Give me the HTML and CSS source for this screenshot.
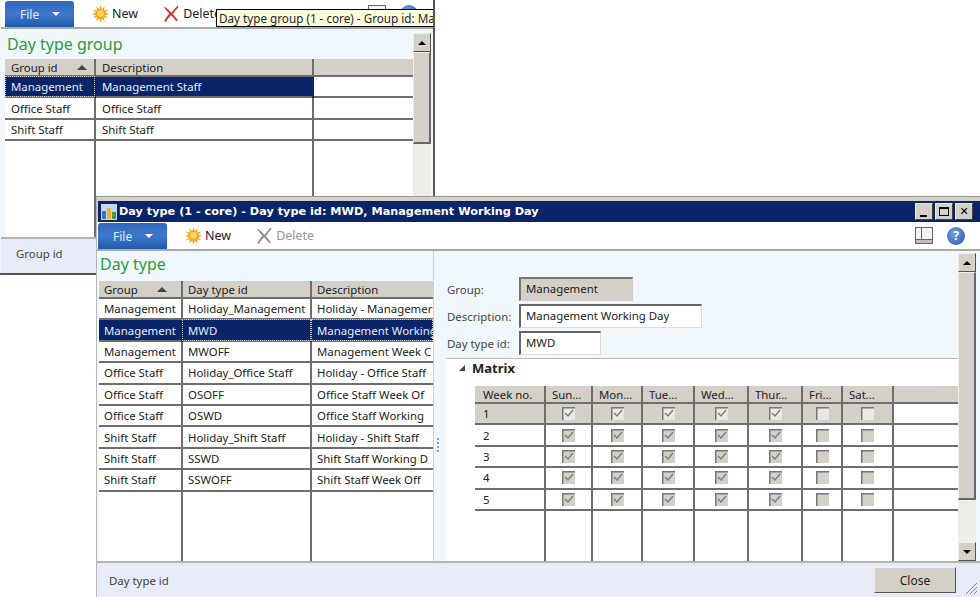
FILE: index.html
```html
<!DOCTYPE html>
<html lang="en">
<head>
    <meta charset="UTF-8">
    <title>Day type</title>
    <link rel="stylesheet" href="styles.css">
</head>
<body>
    <svg class="defs" width="0" height="0">
        <symbol id="sun" viewBox="0 0 20 20">
            <path d="M10 0l1.500 5 3.500-3.500-1 5 5-1-3.500 3.500 5 1.500-5 1.500 3.500 3.500-5-1 1 5-3.500-3.500-1.500 5-1.500-5-3.500 3.500 1-5-5 1 3.500-3.500-5-1.500 5-1.500-3.500-3.500 5 1-1-5 3.500 3.500z" fill="#f6a623"/>
            <circle cx="10" cy="10" r="4" fill="#fcd45c"/>
        </symbol>
        <symbol id="cross" viewBox="0 0 20 20">
            <path d="M2 2c4 3 6 5 8 7 2-2 4-5 7-8l1.500 1c-3 3-5 6-7 9 2 2 4 4 6 7l-2 1c-2-3-4-5-6-7-2 2-4 4-6 8l-2-1c2-4 4-7 6-9-2-2-4-4-6-7z"/>
        </symbol>
        <symbol id="tick" viewBox="0 0 13 13">
            <rect width="13" height="13" fill="currentColor"/>
            <path d="M0.750 13V0.750H13" fill="none" stroke="#777" stroke-width="1.500"/>
            <path d="M3 6l3 3 5-6" fill="none" stroke="#808080" stroke-width="1.500"/>
        </symbol>
        <symbol id="untick" viewBox="0 0 13 13">
            <rect width="13" height="13" fill="currentColor"/>
            <path d="M0.750 13V0.750H13" fill="none" stroke="#777" stroke-width="1.500"/>
        </symbol>
    </svg>

    <div class="desktop">
        <!-- back window -->
        <div class="window window-back">
            <div class="toolbar">
                <div class="file-btn">File <span class="caret"></span></div>
                <div class="tool"><svg class="ico"><use href="#sun"/></svg>New</div>
                <div class="tool"><svg class="ico ico-red"><use href="#cross"/></svg>Delete</div>
                <div class="tool-right">
                    <svg class="layout-ico" viewBox="0 0 18 18">
                        <rect x="0.500" y="0.500" width="17" height="16" fill="#f4f4f4" stroke="#666"/>
                    </svg>
                    <div class="help"></div>
                </div>
            </div>
            <div class="body">
                <div class="pane-left">
                    <h2 class="form-title">Day type group</h2>
                    <div class="grid-box">
                        <table class="grid">
                            <colgroup><col class="w90"><col class="w218"><col></colgroup>
                            <tr class="head"><th>Group id <span class="sort"></span></th><th>Description</th><th></th></tr>
                            <tr class="row sel"><td class="focus">Management</td><td>Management Staff</td><td class="blank"></td></tr>
                            <tr class="row"><td>Office Staff</td><td>Office Staff</td><td></td></tr>
                            <tr class="row"><td>Shift Staff</td><td>Shift Staff</td><td></td></tr>
                            <tr class="filler"><td></td><td></td><td></td></tr>
                        </table>
                    </div>
                </div>
                <div class="scrollbar">
                    <div class="sb-btn"><span class="up"></span></div>
                    <div class="sb-thumb thumb-back"></div>
                    <div class="sb-track"></div>
                </div>
            </div>
            <div class="status">Group id</div>
            <div class="tooltip">Day type group (1 - core) - Group id: Ma</div>
        </div>

        <!-- front window -->
        <div class="window window-front">
            <div class="titlebar">
                <svg class="app-ico" viewBox="0 0 16 16">
                    <rect width="16" height="16" fill="#c7d8ec"/>
                    <rect x="1" y="7" width="4" height="8" fill="#3f74c4"/>
                    <rect x="6" y="4" width="4" height="11" fill="#e8b33a"/>
                    <rect x="11" y="8" width="4" height="7" fill="#4d9a3e"/>
                </svg>
                <span class="title-text">Day type (1 - core) - Day type id: MWD, Management Working Day</span>
                <div class="win-btns">
                    <div class="win-btn"><span class="min"></span></div>
                    <div class="win-btn"><span class="max"></span></div>
                    <div class="win-btn close-x">✕</div>
                </div>
            </div>
            <div class="toolbar">
                <div class="file-btn">File <span class="caret"></span></div>
                <div class="tool"><svg class="ico"><use href="#sun"/></svg>New</div>
                <div class="tool disabled"><svg class="ico ico-gray"><use href="#cross"/></svg>Delete</div>
                <div class="tool-right">
                    <svg class="layout-ico" viewBox="0 0 18 18">
                        <rect x="0.500" y="0.500" width="17" height="16" fill="#f4f4f4" stroke="#666"/>
                        <path d="M6.500 1v11M1 12.500h16" stroke="#666" fill="none"/>
                        <rect x="1" y="13" width="16" height="3" fill="#bbb"/>
                    </svg>
                    <div class="help">?</div>
                </div>
            </div>
            <div class="body">
                <div class="pane-left pane-list">
                    <h2 class="form-title">Day type</h2>
                    <div class="grid-box">
                        <table class="grid">
                            <colgroup><col class="w83"><col class="w129"><col></colgroup>
                            <tr class="head"><th>Group <span class="sort"></span></th><th>Day type id</th><th>Description</th></tr>
                            <tr class="row"><td>Management</td><td>Holiday_Management</td><td>Holiday - Managemer</td></tr>
                            <tr class="row sel"><td>Management</td><td class="focus">MWD</td><td class="focus">Management Working</td></tr>
                            <tr class="row"><td>Management</td><td>MWOFF</td><td>Management Week C</td></tr>
                            <tr class="row"><td>Office Staff</td><td>Holiday_Office Staff</td><td>Holiday - Office Staff</td></tr>
                            <tr class="row"><td>Office Staff</td><td>OSOFF</td><td>Office Staff Week Of</td></tr>
                            <tr class="row"><td>Office Staff</td><td>OSWD</td><td>Office Staff Working</td></tr>
                            <tr class="row"><td>Shift Staff</td><td>Holiday_Shift Staff</td><td>Holiday - Shift Staff</td></tr>
                            <tr class="row"><td>Shift Staff</td><td>SSWD</td><td>Shift Staff Working D</td></tr>
                            <tr class="row"><td>Shift Staff</td><td>SSWOFF</td><td>Shift Staff Week Off</td></tr>
                            <tr class="filler"><td></td><td></td><td></td></tr>
                        </table>
                    </div>
                </div>
                <div class="splitter"><i></i><i></i><i></i><i></i></div>
                <div class="pane-right">
                    <div class="fields">
                        <div class="field"><label>Group:</label><div class="input readonly w114">Management</div></div>
                        <div class="field"><label>Description:</label><div class="input w183">Management Working Day</div></div>
                        <div class="field"><label>Day type id:</label><div class="input w82">MWD</div></div>
                    </div>
                    <div class="section">
                        <div class="section-head"><span class="tri"></span>Matrix</div>
                        <div class="matrix-box">
                            <table class="grid matrix">
                                <colgroup><col class="m70"><col class="m47"><col class="m50"><col class="m52"><col class="m54"><col class="m54"><col class="m40"><col class="m51"><col></colgroup>
                                <tr class="head"><th>Week no.</th><th>Sun…</th><th>Mon…</th><th>Tue…</th><th>Wed…</th><th>Thur…</th><th>Fri…</th><th>Sat…</th><th></th></tr>
                                <tr class="row grey"><td>1</td><td class="chk"><svg><use href="#tick"/></svg></td><td class="chk"><svg><use href="#tick"/></svg></td><td class="chk"><svg><use href="#tick"/></svg></td><td class="chk"><svg><use href="#tick"/></svg></td><td class="chk"><svg><use href="#tick"/></svg></td><td class="chk"><svg><use href="#untick"/></svg></td><td class="chk"><svg><use href="#untick"/></svg></td><td class="blank"></td></tr>
                                <tr class="row"><td>2</td><td class="chk"><svg><use href="#tick"/></svg></td><td class="chk"><svg><use href="#tick"/></svg></td><td class="chk"><svg><use href="#tick"/></svg></td><td class="chk"><svg><use href="#tick"/></svg></td><td class="chk"><svg><use href="#tick"/></svg></td><td class="chk"><svg><use href="#untick"/></svg></td><td class="chk"><svg><use href="#untick"/></svg></td><td></td></tr>
                                <tr class="row"><td>3</td><td class="chk"><svg><use href="#tick"/></svg></td><td class="chk"><svg><use href="#tick"/></svg></td><td class="chk"><svg><use href="#tick"/></svg></td><td class="chk"><svg><use href="#tick"/></svg></td><td class="chk"><svg><use href="#tick"/></svg></td><td class="chk"><svg><use href="#untick"/></svg></td><td class="chk"><svg><use href="#untick"/></svg></td><td></td></tr>
                                <tr class="row"><td>4</td><td class="chk"><svg><use href="#tick"/></svg></td><td class="chk"><svg><use href="#tick"/></svg></td><td class="chk"><svg><use href="#tick"/></svg></td><td class="chk"><svg><use href="#tick"/></svg></td><td class="chk"><svg><use href="#tick"/></svg></td><td class="chk"><svg><use href="#untick"/></svg></td><td class="chk"><svg><use href="#untick"/></svg></td><td></td></tr>
                                <tr class="row"><td>5</td><td class="chk"><svg><use href="#tick"/></svg></td><td class="chk"><svg><use href="#tick"/></svg></td><td class="chk"><svg><use href="#tick"/></svg></td><td class="chk"><svg><use href="#tick"/></svg></td><td class="chk"><svg><use href="#tick"/></svg></td><td class="chk"><svg><use href="#untick"/></svg></td><td class="chk"><svg><use href="#untick"/></svg></td><td></td></tr>
                                <tr class="filler"><td></td><td></td><td></td><td></td><td></td><td></td><td></td><td></td><td class="blank"></td></tr>
                            </table>
                        </div>
                    </div>
                </div>
                <div class="scrollbar">
                    <div class="sb-btn"><span class="up"></span></div>
                    <div class="sb-thumb thumb-front"></div>
                    <div class="sb-track"></div>
                    <div class="sb-btn"><span class="down"></span></div>
                </div>
            </div>
            <div class="status">
                <span>Day type id</span>
                <button class="close-btn">Close</button>
                <svg class="grip" viewBox="0 0 12 12"><path d="M1 12L12 1M5 12l7-7M9 12l3-3" stroke="#888" fill="none"/></svg>
            </div>
        </div>
    </div>
</body>
</html>
```

FILE: styles.css
```css
* {
    box-sizing: border-box;
}

html, body {
    margin: 0;
    height: 100%;
    background-color: white;
}

body {
    font-family: "Noto Sans", sans-serif;
    font-size: 11.400px;
    color: #222;
    overflow: hidden;
}

.defs {
    position: absolute;
}

.desktop {
    position: relative;
    width: 980px;
    height: 597px;
    overflow: hidden;
}

.window {
    position: absolute;
    display: flex;
    flex-direction: column;
    background-color: #f0f7fd;
    overflow: hidden;
}

.window-back {
    left: 0;
    top: 0;
    width: 435px;
    height: 275px;
    padding-left: 1px;
    border-right: 2px solid #555;
    border-bottom: 2px solid #555;
}

.window-front {
    left: 96px;
    top: 196px;
    width: 884px;
    height: 401px;
    padding-top: 4px;
    border-left: 1px solid #b8b8b8;
    border-top: 1px solid #999;
    background-color: #d4d0c8;
}

.titlebar {
    display: flex;
    align-items: center;
    height: 21px;
    margin-left: 1px;
    padding: 0 7px 0 3px;
    background-color: #0a246a;
    color: white;
    font-family: "DejaVu Sans", sans-serif;
    font-size: 11.250px;
    font-weight: bold;
}

.app-ico {
    width: 16px;
    height: 16px;
    margin-right: 2px;
}

.title-text {
    flex: 1;
    white-space: nowrap;
}

.win-btns {
    display: flex;
    gap: 2px;
}

.win-btn {
    position: relative;
    display: flex;
    align-items: center;
    justify-content: center;
    width: 18px;
    height: 17px;
    background-color: #d4d0c8;
    border: 1px solid;
    border-color: #eee #444 #444 #eee;
    color: black;
    font-size: 11px;
    font-weight: bold;
}

.min {
    width: 7px;
    height: 2px;
    margin-top: 8px;
    margin-right: 2px;
    background-color: black;
}

.max {
    width: 10px;
    height: 9px;
    border: 1px solid black;
    border-top-width: 2px;
}

.toolbar {
    display: flex;
    align-items: center;
    flex: none;
    height: 29px;
    padding-left: 4px;
    background-color: white;
    border-bottom: 2px solid #a9a9a9;
    font-size: 12.500px;
}

.window-front .toolbar {
    height: 29px;
    padding-left: 1px;
}

.file-btn {
    display: flex;
    align-items: center;
    align-self: flex-end;
    width: 69px;
    height: 26px;
    padding-left: 15px;
    background: linear-gradient(#2f68bb, #3f78cc 50%, #1f5aa8);
    border-radius: 3px 3px 0 0;
    color: #dfeaf8;
    font-size: 12px;
}

.caret {
    width: 0;
    height: 0;
    margin-left: 13px;
    border: 4px solid transparent;
    border-top: 4px solid white;
    border-bottom: 0;
}

.tool {
    display: flex;
    align-items: center;
    gap: 3px;
    margin-left: 18px;
    white-space: nowrap;
}

.tool + .tool {
    margin-left: 25px;
}

.disabled {
    color: #999;
}

.ico {
    width: 17px;
    height: 17px;
}

.ico-red {
    fill: #c83a2c;
}

.ico-gray {
    fill: #8f8f8f;
}

.tool-right {
    display: flex;
    align-items: center;
    gap: 14px;
    margin-left: auto;
    margin-right: 15px;
}

.layout-ico {
    width: 18px;
    height: 18px;
}

.help {
    width: 18px;
    height: 18px;
    background: radial-gradient(circle at 40% 35%, #6f9fe0, #2557a8);
    border-radius: 50%;
    color: white;
    font-size: 12px;
    font-weight: bold;
    line-height: 18px;
    text-align: center;
}

.body {
    display: flex;
    flex: 1;
    min-height: 0;
    background-color: #f0f7fd;
}

.pane-left {
    display: flex;
    flex: 1;
    flex-direction: column;
    min-width: 0;
    padding-left: 4px;
}

.pane-list {
    flex: none;
    width: 336px;
    padding-left: 2px;
}

.form-title {
    margin: 0 0 0 2px;
    flex: none;
    height: 30px;
    padding-top: 4px;
    color: #2c9c3c;
    font-size: 16px;
    font-weight: normal;
    line-height: 22px;
}

.pane-list .form-title {
    margin-left: 1px;
    padding-top: 2px;
}

.grid-box {
    flex: 1;
    min-height: 0;
}

.grid {
    width: 100%;
    height: 100%;
    table-layout: fixed;
    border-collapse: collapse;
    background-color: white;
}

.grid th, .grid td {
    padding: 0 0 0 6px;
    overflow: hidden;
    white-space: nowrap;
    border-right: 2px solid #6e6e6e;
    text-align: left;
    font-weight: normal;
}

.pane-list .grid th, .pane-list .grid td {
    padding-left: 5px;
}

.grid th:last-child, .grid td:last-child {
    border-right: 0;
}

.matrix th:first-child, .matrix td:first-child {
    padding-left: 8px;
}

.head {
    height: 17px;
    background-color: #d4d0c8;
    border-bottom: 2px solid #6e6e6e;
}

.sort {
    display: inline-block;
    width: 0;
    height: 0;
    margin-left: 16px;
    vertical-align: 2px;
    border: 5px solid transparent;
    border-bottom: 5px solid #444;
    border-top: 0;
}

.row {
    height: 21.400px;
    border-bottom: 2px solid #6e6e6e;
}

.sel {
    background-color: #0a246a;
    color: #e6ecf6;
}

.sel td {
    border-right-color: #0a246a;
}

.sel .focus {
    outline: 1px dotted #c9c9c9;
    outline-offset: -1px;
}

.sel .blank {
    background-color: white;
}

.grey {
    background-color: #d4d0c8;
}

.grey .blank {
    background-color: white;
}

.w90 { width: 90px; }
.w218 { width: 218px; }
.w83 { width: 83px; }
.w129 { width: 129px; }

.m70 { width: 70px; }
.m47 { width: 47px; }
.m50 { width: 50px; }
.m52 { width: 52px; }
.m54 { width: 54px; }
.m40 { width: 40px; }
.m51 { width: 51px; }

.splitter {
    display: flex;
    flex: none;
    flex-direction: column;
    align-items: flex-start;
    justify-content: center;
    gap: 2px;
    width: 13px;
    padding: 78px 0 0 3px;
    border-left: 1px solid #c4d3e6;
}

.splitter i {
    width: 2px;
    height: 2px;
    background-color: #8a9aa8;
}

.pane-right {
    display: flex;
    flex: 1;
    flex-direction: column;
    min-width: 0;
    background-color: #f0f7fd;
}

.fields {
    display: flex;
    flex: none;
    flex-direction: column;
    gap: 3px;
    padding: 26px 0 3px 1px;
}

.field {
    display: flex;
    align-items: center;
    height: 24px;
}

.field label {
    width: 72px;
    color: #444;
}

.input {
    height: 24px;
    padding-left: 5px;
    background-color: white;
    border: 1px solid #ddd;
    border-top: 2px solid #666;
    border-left: 2px solid #666;
    line-height: 19px;
}

.readonly {
    background-color: #d4d0c8;
    border-color: #d4d0c8 #d4d0c8 #d4d0c8 #777;
    border-top-color: #777;
}

.w114 { width: 114px; }
.w183 { width: 183px; }
.w82 { width: 82px; }

.section {
    display: flex;
    flex: 1;
    flex-direction: column;
    min-height: 0;
    background-color: white;
    border-top: 1px solid #b9b9b9;
}

.section-head {
    display: flex;
    align-items: center;
    flex: none;
    height: 27px;
    padding: 0 0 9px 13px;
    color: #222;
    font-size: 13px;
    font-weight: bold;
}

.tri {
    width: 0;
    height: 0;
    margin-right: 7px;
    border-bottom: 6px solid #444;
    border-left: 6px solid transparent;
}

.matrix-box {
    flex: 1;
    min-height: 0;
    padding-left: 29px;
}

.grid .chk {
    padding: 0;
    color: #d4d0c8;
    text-align: center;
    line-height: 0;
}

.grid .grey .chk {
    color: #e9e8e2;
}

.chk svg {
    width: 13px;
    height: 13px;
}

.scrollbar {
    display: flex;
    flex: none;
    flex-direction: column;
    width: 18px;
    margin-right: 2px;
    margin-top: 4px;
    background-color: #eeede9;
}

.window-front .scrollbar {
    margin-right: 4px;
    margin-top: 2px;
}

.sb-btn {
    display: flex;
    align-items: center;
    justify-content: center;
    flex: none;
    height: 19px;
    background-color: #d4d0c8;
    border: 1px solid;
    border-color: #eee #555 #555 #eee;
}

.up, .down {
    width: 0;
    height: 0;
    border: 4px solid transparent;
}

.up {
    border-bottom: 4px solid black;
    border-top: 0;
}

.down {
    border-top: 4px solid black;
    border-bottom: 0;
}

.sb-thumb {
    flex: none;
    background-color: #d4d0c8;
    border: 1px solid;
    border-color: #eee #666 #666 #eee;
    border-right-width: 2px;
    border-bottom-width: 2px;
}

.thumb-back {
    height: 92px;
}

.thumb-front {
    height: 228px;
}

.sb-track {
    flex: 1;
}

.status {
    position: relative;
    display: flex;
    align-items: center;
    flex: none;
    height: 36px;
    padding: 0 0 5px 15px;
    background-color: #e6ebf7;
    border-top: 2px solid #b4b4b4;
    color: #444;
}

.window-front .status {
    padding: 0 0 0 12px;
}

.close-btn {
    margin-left: auto;
    margin-right: 24px;
    width: 82px;
    height: 26px;
    background-color: #d4d0c8;
    border: 1px solid;
    border-color: #eee #555 #555 #eee;
    color: #222;
    font-family: inherit;
    font-size: 12px;
}

.grip {
    position: absolute;
    right: 3px;
    bottom: 3px;
    width: 12px;
    height: 12px;
}

.tooltip {
    position: absolute;
    left: 216px;
    top: 9px;
    right: -2px;
    height: 18px;
    padding-left: 2px;
    overflow: hidden;
    white-space: nowrap;
    background-color: #ffffe1;
    border: 1px solid black;
    color: #222;
    font-size: 11.700px;
    line-height: 16px;
}
```
